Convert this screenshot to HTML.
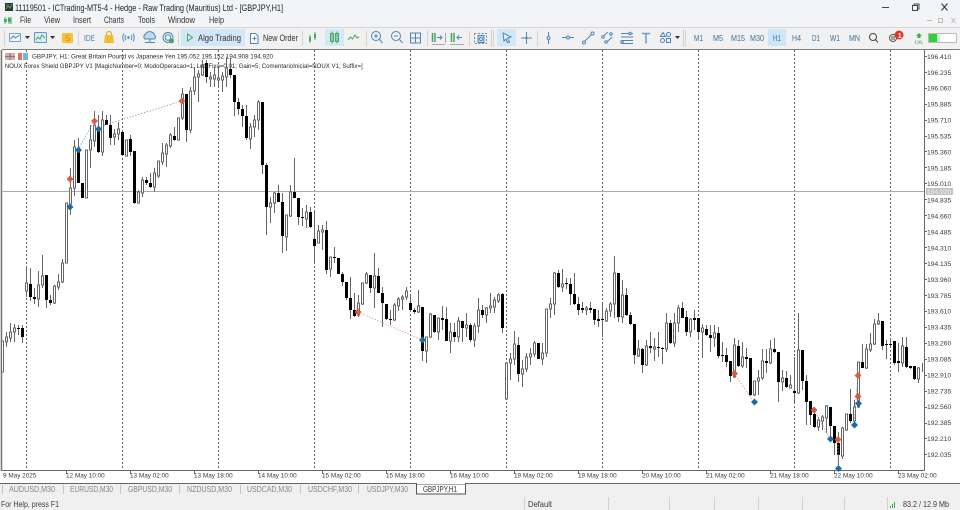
<!DOCTYPE html>
<html lang="en"><head><meta charset="utf-8"><title>MT5</title>
<style>
html,body{margin:0;padding:0;background:#fff;width:960px;height:510px;overflow:hidden}
svg{display:block;font-family:"Liberation Sans",Arial,sans-serif;filter:blur(.3px)}
.t{font-size:9px;fill:#222}
.m{font-size:8.8px;fill:#333}
.b{font-size:8.6px;fill:#3d6f98}
.i{fill:none;stroke:#4a86b8;stroke-width:1}
.g{fill:none;stroke:#45a860;stroke-width:1}
.y{font-size:6.7px;fill:#3a3a3a}
.x{font-size:6.4px;fill:#3a3a3a}
.h{font-size:6.8px;fill:#2a2a2a}
.tab{font-size:8px;fill:#858585}
.s{font-size:8px;fill:#3c3c3c}
</style></head><body>
<svg width="960" height="510" viewBox="0 0 960 510" xmlns="http://www.w3.org/2000/svg">
<defs><linearGradient id="tb" x1="0" y1="0" x2="0" y2="1"><stop offset="0" stop-color="#f0f5fa"/><stop offset="1" stop-color="#f3f4f5"/></linearGradient></defs>
<rect width="960" height="28" fill="url(#tb)"/>
<rect y="28" width="960" height="21" fill="#f1f1f1"/>
<path d="M0 27.5H960" stroke="#d6d6d6"/>
<rect x="5" y="3" width="8" height="8" fill="#2d3a2d"/><path d="M6 9l2-3 2 2 2-4" stroke="#3cc05a" fill="none"/><path d="M6 5h3" stroke="#d05040"/>
<text x="15" y="11" class="t" textLength="268" lengthAdjust="spacingAndGlyphs">11119501 - ICTrading-MT5-4 - Hedge - Raw Trading (Mauritius) Ltd - [GBPJPY,H1]</text>
<path d="M882 7.5h7" stroke="#444"/><rect x="912.5" y="5.5" width="5" height="5" fill="none" stroke="#444"/><path d="M914 5v-1h5v5h-1" fill="none" stroke="#444"/><path d="M941.5 3.5l6 7M947.5 3.500l-6 7" stroke="#333"/>
<path d="M927 20.5h5" stroke="#bbb"/><rect x="938.5" y="18.5" width="4" height="4" fill="none" stroke="#bbb"/><path d="M951.5 18l4 5M955.5 18l-4 5" stroke="#bbb"/>
<path d="M5 17v7M9 17v7M11 17v7" stroke="#4eaa60"/><rect x="4" y="19" width="3" height="3" fill="#4eaa60"/><rect x="8" y="18" width="3" height="4" fill="#4eaa60"/>
<text x="20" y="23" class="m" textLength="11" lengthAdjust="spacingAndGlyphs">File</text>
<text x="44" y="23" class="m" textLength="16" lengthAdjust="spacingAndGlyphs">View</text>
<text x="73" y="23" class="m" textLength="18" lengthAdjust="spacingAndGlyphs">Insert</text>
<text x="104" y="23" class="m" textLength="20" lengthAdjust="spacingAndGlyphs">Charts</text>
<text x="138" y="23" class="m" textLength="17" lengthAdjust="spacingAndGlyphs">Tools</text>
<text x="168" y="23" class="m" textLength="27" lengthAdjust="spacingAndGlyphs">Window</text>
<text x="209" y="23" class="m" textLength="15" lengthAdjust="spacingAndGlyphs">Help</text>

<!-- toolbar -->
<path d="M78.5 31v15M178.5 31v15M302.5 31v15M366.5 31v15M427.5 31v15M469.5 31v15M491.5 30v17M493.5 30v17M537.5 31v15M683.5 30v17M685.5 30v17M4.5 30v17" stroke="#d4d4d4"/>
<rect x="9.5" y="33.5" width="11" height="8" fill="#eef5fb" stroke="#7aa6cc"/><path d="M10.5 39l3-3 2 2 4-3" class="i"/>
<path d="M25 36h5l-2.500 3z" fill="#333"/>
<rect x="34.500" y="32.500" width="12" height="10" rx="1" fill="#dbeaf6" stroke="#5f9ac9"/><path d="M36 40l2-3 2 2 2-4 3 3" class="g"/>
<path d="M50 36h5l-2.500 3z" fill="#333"/>
<rect x="62" y="33" width="11" height="10" rx="1" fill="#f6c23e"/><text x="65" y="41" style="font-size:8px;fill:#d98a10">S</text>
<text x="84" y="41" style="font-size:8px;fill:#3f7fba" textLength="11" lengthAdjust="spacingAndGlyphs">IDE</text>
<path d="M104 43l1-8h8l1 8z" fill="#f3bd2f"/><path d="M106.500 35v-1a2.500 2.500 0 0 1 5 0v1" fill="none" stroke="#e0a020"/>
<circle cx="128.500" cy="37.500" r="1.300" fill="#4a86b8"/><path d="M126 35a4 4 0 0 0 0 5M131 35a4 4 0 0 1 0 5M124 33.500a7 7 0 0 0 0 8M133 33.500a7 7 0 0 1 0 8" class="i"/>
<path d="M145 39a3 3 0 0 1 .5-5 5 5 0 0 1 9 1 2.500 2.500 0 0 1 0 4z" fill="#bcd9ef" stroke="#4a86b8"/><path d="M150 39v3M145 42.500h10" class="i"/>
<circle cx="168" cy="37.500" r="5" class="i"/><circle cx="168" cy="37.500" r="2.800" class="i"/><circle cx="171.500" cy="41" r="2.500" fill="#45a860"/>
<rect x="181" y="29" width="64" height="17" fill="#d2e7f8"/>
<path d="M187.500 34l5 3.500-5 3.500z" fill="none" stroke="#4aa860"/>
<text x="198" y="41" class="m" textLength="43" lengthAdjust="spacingAndGlyphs">Algo Trading</text>
<path d="M250.500 33.500h5l2.500 2.500v7.500h-7.500z" fill="#fdfdfd" stroke="#4a86b8"/><path d="M254.500 36.500v4M252.500 38.500h4" class="i"/>
<text x="263" y="41" class="m" textLength="35" lengthAdjust="spacingAndGlyphs">New Order</text>
<path d="M310 35v8M315 32v8" stroke="#45a860"/><rect x="309" y="37" width="2" height="4" fill="#45a860"/><rect x="314" y="34" width="2" height="4" fill="#45a860"/>
<rect x="325" y="29" width="19" height="17" fill="#d2e7f8"/>
<rect x="330.500" y="33.500" width="3" height="8" fill="none" stroke="#45a860"/><rect x="335.500" y="33.500" width="3" height="8" fill="none" stroke="#45a860"/><path d="M332 31.500v12M337 31.500v12" stroke="#45a860"/>
<path d="M348 40l2.500-3 2 2 2.500-4 2 3 2-1" class="g"/>
<circle cx="376" cy="36" r="4.500" class="i"/><path d="M379.500 39.500l3 3.500M374 36h4M376 34v4" class="i"/>
<circle cx="396" cy="36" r="4.500" class="i"/><path d="M399.500 39.500l3 3.500M394 36h4" class="i"/>
<rect x="410.500" y="33" width="10" height="10" class="i"/><path d="M415.500 33v10M410.500 38h10" class="i"/>
<path d="M432.500 33v9M435 33v9" stroke="#45a860" stroke-width="1.500"/><path d="M437 37.500h4M440 35.500l2 2-2 2" class="i"/><path d="M445.500 33v10" stroke="#aaa"/><path d="M432 44.500h13" stroke="#aaa"/>
<path d="M451.500 33v9M454 33v9" stroke="#45a860" stroke-width="1.500"/><path d="M462 37.500h-4M459 35.500l-2 2 2 2" class="i"/><path d="M450 44.500h14" stroke="#aaa"/>
<rect x="474.500" y="33.500" width="12" height="10" fill="none" stroke="#888" stroke-dasharray="2 1.500"/><rect x="478" y="35.500" width="6" height="7" fill="#bcd9ef" stroke="#4a86b8"/><circle cx="481" cy="39" r="1.500" fill="#fff" stroke="#4a86b8"/>
<rect x="497" y="29" width="19" height="17" fill="#d2e7f8"/><path d="M503 33l8 4-3.500 1 2 4-2 .5-1.500-3.500-2 2z" fill="#e8f3fb" stroke="#4a86b8"/>
<path d="M526.500 32v12M521 38h11" class="i"/><circle cx="526.500" cy="38" r="1.200" fill="#4a86b8"/>
<path d="M548.500 32v12" class="i"/><circle cx="548.500" cy="38" r="1.500" fill="#f1f1f1" stroke="#4a86b8"/>
<path d="M562 37.500h12" class="i"/><circle cx="568" cy="37.500" r="1.500" fill="#f1f1f1" stroke="#4a86b8"/>
<path d="M584 42l8-8" class="i"/><circle cx="584" cy="42.500" r="1.500" fill="#f1f1f1" stroke="#4a86b8"/><circle cx="592.500" cy="33.500" r="1.500" fill="#f1f1f1" stroke="#4a86b8"/>
<path d="M602 37l6-5M606 43l6-6" class="i"/><circle cx="603" cy="37" r="1.300" fill="#f1f1f1" stroke="#4a86b8"/><circle cx="611" cy="34" r="1.300" fill="#f1f1f1" stroke="#4a86b8"/><circle cx="606" cy="42" r="1.300" fill="#f1f1f1" stroke="#4a86b8"/>
<path d="M621 33.500h12M621 37h12M621 40.500h12M621 43.500h12" class="i"/><circle cx="630" cy="33.500" r="1.200" fill="#f1f1f1" stroke="#4a86b8"/><circle cx="622" cy="42" r="1.200" fill="#f1f1f1" stroke="#4a86b8"/>
<path d="M642 33.500h8M646 33.500v10" stroke="#6b9cc4" stroke-width="1.500" fill="none"/>
<path d="M663 32.500l2.500 4h-5z" class="i"/><circle cx="668.500" cy="34.500" r="2" class="i"/><circle cx="662.500" cy="40.500" r="2" class="i"/><rect x="666.500" y="38.500" width="4" height="4" class="i"/>
<path d="M675 36h5l-2.500 3z" fill="#333"/>
<rect x="768" y="29" width="18" height="17" fill="#cfe5f8"/>
<g class="b">
<text x="694" y="41" textLength="9" lengthAdjust="spacingAndGlyphs">M1</text>
<text x="713" y="41" textLength="10" lengthAdjust="spacingAndGlyphs">M5</text>
<text x="731" y="41" textLength="14" lengthAdjust="spacingAndGlyphs">M15</text>
<text x="750" y="41" textLength="14" lengthAdjust="spacingAndGlyphs">M30</text>
<text x="773" y="41" textLength="8" lengthAdjust="spacingAndGlyphs">H1</text>
<text x="792" y="41" textLength="9" lengthAdjust="spacingAndGlyphs">H4</text>
<text x="812" y="41" textLength="8" lengthAdjust="spacingAndGlyphs">D1</text>
<text x="830" y="41" textLength="10" lengthAdjust="spacingAndGlyphs">W1</text>
<text x="849" y="41" textLength="11" lengthAdjust="spacingAndGlyphs">MN</text>
</g>
<circle cx="873" cy="37" r="3.500" fill="none" stroke="#444"/><path d="M875.500 39.500l2.500 3" stroke="#444"/>
<circle cx="893" cy="38" r="3.500" fill="none" stroke="#555"/><path d="M891 37h4M891 39h4" stroke="#555"/>
<circle cx="899" cy="35" r="4.500" fill="#e0352a"/><text x="897.700" y="38" style="font-size:7px;font-weight:bold;fill:#fff">1</text>
<path d="M919 33l3 3h-1.500v2h-3v-2H916z" fill="#3cb04c"/><text x="915" y="43.500" style="font-size:4.500px;fill:#3cb04c;font-weight:bold">LVL</text>
<rect x="928.500" y="33.500" width="28" height="9" fill="#fff" stroke="#bbb"/><rect x="929" y="34" width="8" height="8" fill="#35d040"/><rect x="937" y="34" width="3" height="8" fill="#c9f3cc"/>

<!-- chart frame -->
<rect x="0" y="49" width="2" height="434" fill="#f0f0f0"/>
<rect x="0" y="471" width="960" height="12" fill="#fff"/>
<path d="M2 49.500H960" stroke="#7d7d7d"/>
<path d="M2 470.500H924.500M924.500 50V470.500" stroke="#666"/>
<path d="M1.500 50V471" stroke="#777" stroke-width="1.500"/>
<!-- grid -->
<path d="M26.500 50V470M122.500 50V470M218.500 50V470M314.500 50V470M410.500 50V470M506.500 50V470M602.500 50V470M698.500 50V470M794.500 50V470M890.500 50V470" stroke="#666" stroke-dasharray="2 2"/>
<path d="M2 191.500H924" stroke="#aaa"/>

<!-- wicks -->
<path fill="none" stroke="#666" d="M6.500 332V347M10.500 323V342M14.500 324V342M18.500 325V335M22.500 325V343M26.500 266V297M30.500 268V301M34.500 288V304M38.500 271V307M42.500 255V288M46.500 275V308M50.500 295V305M54.500 285V304M58.500 274V290M62.500 259V283M70.500 168V215M74.500 140V196M78.500 138V183M90.500 125V168M94.500 111V147M98.500 115V153M102.500 111V156M106.500 115V125M110.500 115V145M114.500 129V145M118.500 122V140M122.500 131V155M130.500 135V156M134.500 151V204M138.500 190V203M142.500 177V197M146.500 177V185M150.500 173V188M154.500 168V192M158.500 161V178M162.500 143V165M166.500 143V167M170.500 133V148M174.500 127V141M182.500 88V120M186.500 94V142M190.500 87V133M194.500 67V95M198.500 70V102M202.500 60V76M206.500 60V83M210.500 72V87M214.500 67V87M218.500 68V88M222.500 72V92M226.500 57V87M230.500 58V78M234.500 75V116M238.500 98V115M242.500 105V127M246.500 105V140M250.500 123V149M254.500 115V137M258.500 100V130M262.500 102V174M266.500 163V235M270.500 197V223M274.500 192V213M278.500 185V202M282.500 193V253M286.500 215V251M290.500 185V217M294.500 158V198M298.500 198V225M302.500 208V226M306.500 205V228M310.500 207V228M314.500 210V262M318.500 225V243M322.500 225V250M326.500 221V274M330.500 257V277M334.500 247V263M342.500 272V286M346.500 282V300M350.500 277V319M354.500 293V317M358.500 295V317M362.500 283V305M366.500 272V284M370.500 275V293M374.500 253V308M378.500 268V293M382.500 287V327M386.500 304V320M390.500 310V325M394.500 303V321M398.500 297V311M402.500 295V310M406.500 287V300M410.500 295V311M414.500 308V314M418.500 290V313M422.500 307V361M426.500 337V363M430.500 313V338M434.500 315V333M438.500 318V340M442.500 306V330M446.500 307V341M450.500 323V353M454.500 323V342M458.500 317V342M462.500 321V342M466.500 313V337M470.500 323V342M474.500 323V347M478.500 298V333M482.500 305V318M486.500 307V323M490.500 293V313M494.500 297V313M498.500 293V303M502.500 293V333M510.500 353V380M514.500 331V365M518.500 337V382M522.500 360V387M526.500 353V372M530.500 348V365M534.500 341V357M542.500 343V365M546.500 309V357M550.500 298V318M554.500 272V315M558.500 270V288M562.500 269V292M566.500 278V289M570.500 278V305M574.500 273V305M578.500 297V315M582.500 302V313M586.500 306V315M590.500 302V313M594.500 309V325M598.500 310V327M602.500 303V337M606.500 308V322M610.500 302V317M614.500 256V318M618.500 273V322M622.500 280V323M626.500 288V316M630.500 312V325M634.500 324V364M638.500 340V357M642.500 348V373M646.500 340V366M650.500 332V353M654.500 338V361M658.500 332V357M662.500 347V364M666.500 313V352M670.500 320V344M674.500 313V347M678.500 305V332M682.500 302V318M686.500 311V336M690.500 318V337M694.500 310V330M698.500 318V338M702.500 324V358M706.500 325V336M710.500 325V352M714.500 325V347M718.500 327V358M722.500 342V362M726.500 348V367M730.500 361V382M734.500 338V378M738.500 340V367M742.500 342V368M746.500 348V368M750.500 358V396M754.500 381V396M758.500 370V395M762.500 349V380M766.500 349V373M770.500 340V364M774.500 338V353M778.500 352V402M782.500 370V391M786.500 371V388M790.500 375V388M794.500 357V403M798.500 313V394M802.500 350V390M806.500 375V425M806.500 381V402M810.500 401V425M814.500 410V428M818.500 417V431M822.500 415V430M826.500 405V433M830.500 407V438M834.500 426V455M838.500 432V465M842.500 427V459M846.500 414V431M850.500 389V423M854.500 400V428M858.500 362V408M862.500 344V368M866.500 344V369M870.500 333V352M874.500 319V345M878.500 313V325M882.500 321V350M886.500 340V359M890.500 340V346M894.500 341V365M898.500 343V372M902.500 337V367M906.500 337V368M910.500 366V369M914.500 366V380M918.500 367V383M922.500 363V372"/>
<!-- hollow bodies -->
<path fill="#fff" stroke="#666" d="M1.500 341h2v31h-2zM5.500 337h2v5h-2zM9.500 332h2v6h-2zM13.500 328h2v4h-2zM25.500 283h2v8h-2zM37.500 285h2v14h-2zM41.500 276h2v9h-2zM53.500 286h2v17h-2zM57.500 282h2v5h-2zM61.500 263h2v19h-2zM65.500 203h2v60h-2zM69.500 188h2v16h-2zM73.500 147h2v41h-2zM85.500 150h2v48h-2zM89.500 140h2v10h-2zM93.500 125h2v16h-2zM101.500 120h2v32h-2zM113.500 134h2v3h-2zM117.500 129h2v5h-2zM125.500 140h2v16h-2zM137.500 192h2v11h-2zM141.500 180h2v13h-2zM153.500 173h2v14h-2zM157.500 161h2v15h-2zM161.500 153h2v9h-2zM165.500 145h2v9h-2zM169.500 135h2v11h-2zM177.500 118h2v22h-2zM181.500 94h2v24h-2zM189.500 91h2v39h-2zM193.500 77h2v14h-2zM197.500 74h2v3h-2zM201.500 65h2v10h-2zM209.500 77h2v2h-2zM213.500 75h2v4h-2zM217.500 78h2v2h-2zM221.500 76h2v4h-2zM225.500 68h2v9h-2zM249.500 127h2v12h-2zM253.500 120h2v7h-2zM257.500 102h2v18h-2zM269.500 203h2v4h-2zM273.500 193h2v10h-2zM285.500 215h2v22h-2zM289.500 192h2v24h-2zM305.500 212h2v7h-2zM317.500 231h2v12h-2zM321.500 230h2v2h-2zM329.500 257h2v12h-2zM357.500 303h2v12h-2zM361.500 283h2v21h-2zM365.500 274h2v9h-2zM373.500 276h2v12h-2zM393.500 305h2v15h-2zM397.500 299h2v7h-2zM401.500 297h2v2h-2zM405.500 291h2v6h-2zM417.500 306h2v6h-2zM425.500 337h2v14h-2zM429.500 314h2v23h-2zM437.500 318h2v14h-2zM449.500 332h2v9h-2zM457.500 321h2v16h-2zM465.500 325h2v3h-2zM473.500 326h2v14h-2zM477.500 310h2v16h-2zM485.500 308h2v7h-2zM489.500 306h2v2h-2zM493.500 300h2v7h-2zM497.500 295h2v6h-2zM505.500 363h2v36h-2zM509.500 359h2v4h-2zM513.500 344h2v15h-2zM521.500 369h2v5h-2zM525.500 357h2v12h-2zM529.500 354h2v3h-2zM533.500 343h2v11h-2zM541.500 353h2v6h-2zM545.500 309h2v44h-2zM549.500 304h2v5h-2zM553.500 273h2v31h-2zM561.500 284h2v3h-2zM585.500 308h2v2h-2zM605.500 311h2v10h-2zM609.500 304h2v7h-2zM613.500 273h2v31h-2zM621.500 295h2v22h-2zM637.500 349h2v7h-2zM645.500 346h2v19h-2zM653.500 347h2v2h-2zM665.500 323h2v26h-2zM673.500 323h2v20h-2zM677.500 308h2v15h-2zM689.500 319h2v13h-2zM701.500 328h2v4h-2zM713.500 333h2v5h-2zM733.500 345h2v32h-2zM741.500 357h2v9h-2zM753.500 381h2v14h-2zM757.500 378h2v3h-2zM761.500 361h2v17h-2zM769.500 349h2v14h-2zM781.500 378h2v4h-2zM789.500 385h2v3h-2zM797.500 350h2v43h-2zM817.500 420h2v7h-2zM821.500 417h2v4h-2zM825.500 406h2v12h-2zM841.500 428h2v28h-2zM845.500 414h2v16h-2zM853.500 407h2v14h-2zM857.500 362h2v45h-2zM865.500 349h2v19h-2zM869.500 344h2v6h-2zM873.500 324h2v20h-2zM877.500 321h2v3h-2zM901.500 346h2v17h-2zM917.500 368h2v11h-2z"/>
<!-- black bodies -->
<path fill="none" stroke="#000" stroke-width="3" d="M18.500 328V329M22.500 328V337M30.500 284V297M34.500 297V299M46.500 275V300M50.500 300V303M78.500 150V183M82.500 183V198M98.500 130V152M106.500 120V125M110.500 125V138M122.500 132V155M130.500 139V152M134.500 151V203M146.500 180V183M150.500 183V187M174.500 136V140M186.500 94V130M206.500 63V77M230.500 69V75M234.500 75V102M238.500 102V109M242.500 109V116M246.500 116V138M262.500 102V165M266.500 165V207M278.500 193V202M282.500 202V236M294.500 192V198M298.500 198V217M302.500 217V218M310.500 212V227M314.500 239V246M326.500 230V270M334.500 257V258M338.500 258V274M342.500 274V282M346.500 282V298M350.500 298V310M354.500 310V316M370.500 275V288M378.500 276V293M382.500 293V303M386.500 304V319M390.500 319V320M410.500 303V310M414.500 310V312M422.500 307V351M434.500 315V332M442.500 318V320M446.500 319V341M454.500 332V337M462.500 321V328M470.500 325V340M482.500 310V315M502.500 294V328M518.500 345V374M538.500 343V359M558.500 273V287M566.500 283V284M570.500 284V294M574.500 294V304M578.500 304V310M582.500 308V310M590.500 308V310M594.500 309V320M598.500 319V321M602.500 319V320M618.500 273V317M626.500 295V315M630.500 315V324M634.500 324V355M642.500 349V365M650.500 346V348M658.500 347V348M662.500 348V349M670.500 323V343M682.500 308V318M686.500 317V332M694.500 318V320M698.500 318V332M706.500 329V335M710.500 335V338M718.500 333V356M722.500 355V356M726.500 355V362M730.500 361V376M738.500 346V366M746.500 357V359M750.500 358V395M766.500 361V363M774.500 349V352M778.500 352V382M786.500 378V387M794.500 391V393M802.500 350V381M806.500 381V402M810.500 401V415M814.500 414V427M830.500 407V426M834.500 426V443M838.500 443V455M850.500 414V421M862.500 362V368M882.500 321V346M886.500 344V345M890.500 344V345M894.500 341V363M898.500 361V363M906.500 347V367M910.500 366V368M914.500 366V379"/>
<!-- trend lines -->
<path d="M78 150L94 121M98 127L182 101M858 375L854 425M858 396V404" fill="none" stroke="#6f9fc4" stroke-width=".8" stroke-dasharray="1.500 1.500"/>
<path d="M70 179V207M358 312L422 340M734 373L754 402M814 410L830 439M838 439V468" fill="none" stroke="#e29080" stroke-width=".8" stroke-dasharray="1.500 1.500"/>
<!-- markers -->
<path fill="#dd5a3e" d="M70 175.500l3.500 3.500-3.500 3.500-3.500-3.500zM94.500 117.500l3.500 3.500-3.500 3.500-3.500-3.500zM182 97.500l3.500 3.500-3.500 3.500-3.500-3.500zM358 308.500l3.500 3.500-3.500 3.500-3.500-3.500zM734.500 370l3.500 3.500-3.500 3.500-3.500-3.500zM814 406.500l3.500 3.500-3.500 3.500-3.500-3.500zM838 436l3.500 3.500-3.500 3.500-3.500-3.500zM858 393l3.500 3.500-3.500 3.500-3.500-3.500zM858 372l3.500 3.500-3.500 3.500-3.500-3.500z"/>
<path fill="#1d6aa8" d="M70 203.500l3.500 3.500-3.500 3.500-3.500-3.500zM78.500 146.500l3.500 3.500-3.500 3.500-3.500-3.500zM98.500 125.500l3.500 3.500-3.500 3.500-3.500-3.500zM422.500 336.500l3.500 3.500-3.500 3.500-3.500-3.500zM754.500 398.500l3.500 3.500-3.500 3.500-3.500-3.500zM830.500 435.500l3.500 3.500-3.500 3.500-3.500-3.500zM854.500 421.500l3.500 3.500-3.500 3.500-3.500-3.500zM858.500 400l3.500 3.500-3.500 3.500-3.500-3.500zM838.500 465l3.500 3.500-3.500 3.500-3.500-3.500z"/>
<!-- chart heading -->
<rect x="5" y="53" width="10" height="7" fill="#e9a49a"/><path d="M5 56.500h10M10 53v7" stroke="#4a86b8"/>
<rect x="18" y="53" width="4" height="7" fill="#e07060"/><rect x="23" y="53" width="5" height="7" fill="#7fb0d8"/>
<text x="32" y="58.500" class="h" textLength="241" lengthAdjust="spacingAndGlyphs">GBPJPY, H1:  Great Britain Pound vs Japanese Yen  195.052 195.152 194.908 194.920</text>
<text x="4.700" y="68" class="h" textLength="358" lengthAdjust="spacingAndGlyphs">NOUX Forex Shield GBPJPY V1 [MagicNumber=0; ModoOperacao=1; LoteFixo=0.01; Gain=5; ComentarioInicial=NOUX V1; Suffix=]</text>
<!-- y ticks -->
<path d="M924 56.500h3M924 72.500h3M924 88.500h3M924 104.500h3M924 120.500h3M924 136.500h3M924 151.500h3M924 167.500h3M924 183.500h3M924 199.500h3M924 215.500h3M924 231.500h3M924 247.500h3M924 263.500h3M924 279.500h3M924 295.500h3M924 311.500h3M924 327.500h3M924 343.500h3M924 359.500h3M924 375.500h3M924 391.500h3M924 407.500h3M924 423.500h3M924 438.500h3M924 454.500h3" stroke="#666"/>
<g class="y">
<text x="927" y="59">196.410</text><text x="927" y="75">196.235</text><text x="927" y="90.500">196.060</text><text x="927" y="106.500">195.885</text><text x="927" y="122.500">195.710</text><text x="927" y="138.500">195.535</text><text x="927" y="154.500">195.360</text><text x="927" y="170.500">195.185</text><text x="927" y="186">195.010</text><text x="927" y="202.500">194.835</text><text x="927" y="218.500">194.660</text><text x="927" y="234.500">194.485</text><text x="927" y="250.500">194.310</text><text x="927" y="266">194.135</text><text x="927" y="282">193.960</text><text x="927" y="298">193.785</text><text x="927" y="313.500">193.610</text><text x="927" y="329.500">193.435</text><text x="927" y="345.500">193.260</text><text x="927" y="361.500">193.085</text><text x="927" y="377.500">192.910</text><text x="927" y="393.500">192.735</text><text x="927" y="409">192.560</text><text x="927" y="425">192.385</text><text x="927" y="441">192.210</text><text x="927" y="457">192.035</text>
</g>
<rect x="926" y="188" width="27" height="7" fill="#c4c4c4"/><text x="927" y="194" class="y" style="fill:#eee">194.920</text>
<!-- x ticks -->
<path d="M66.500 470v4M130.500 470v4M194.500 470v4M258.500 470v4M322.500 470v4M386.500 470v4M450.500 470v4M514.500 470v4M578.500 470v4M642.500 470v4M706.500 470v4M770.500 470v4M834.500 470v4M898.500 470v4" stroke="#666"/>
<g class="x">
<text x="3" y="477.500">9 May 2025</text><text x="66" y="477.500">12 May 10:00</text><text x="130" y="477.500">13 May 02:00</text><text x="194" y="477.500">13 May 18:00</text><text x="258" y="477.500">14 May 10:00</text><text x="322" y="477.500">15 May 02:00</text><text x="386" y="477.500">15 May 18:00</text><text x="450" y="477.500">16 May 10:00</text><text x="514" y="477.500">19 May 02:00</text><text x="578" y="477.500">19 May 18:00</text><text x="642" y="477.500">20 May 10:00</text><text x="706" y="477.500">21 May 02:00</text><text x="770" y="477.500">21 May 18:00</text><text x="834" y="477.500">22 May 10:00</text><text x="898" y="477.500">23 May 02:00</text>
</g>
<!-- tabs + status -->
<rect y="483" width="960" height="27" fill="#f0f0f0"/>
<path d="M0 483.500H960" stroke="#666"/>
<path d="M2.500 485v9M63.500 485v9M120.500 485v9M179.500 485v9M240.500 485v9M300.500 485v9M358.500 485v9" stroke="#c4c4c4"/>
<path d="M416.500 484v10h49v-10z" fill="#fff" stroke="#555"/><path d="M417 483.500h48" stroke="#fff"/>
<text x="9" y="492" class="tab" textLength="46" lengthAdjust="spacingAndGlyphs">AUDUSD,M30</text>
<text x="70" y="492" class="tab" textLength="43" lengthAdjust="spacingAndGlyphs">EURUSD,M30</text>
<text x="128" y="492" class="tab" textLength="44" lengthAdjust="spacingAndGlyphs">GBPUSD,M30</text>
<text x="187" y="492" class="tab" textLength="45" lengthAdjust="spacingAndGlyphs">NZDUSD,M30</text>
<text x="247" y="492" class="tab" textLength="45" lengthAdjust="spacingAndGlyphs">USDCAD,M30</text>
<text x="308" y="492" class="tab" textLength="44" lengthAdjust="spacingAndGlyphs">USDCHF,M30</text>
<text x="367" y="492" class="tab" textLength="41" lengthAdjust="spacingAndGlyphs">USDJPY,M30</text>
<text x="423" y="492" class="tab" style="fill:#333" textLength="34" lengthAdjust="spacingAndGlyphs">GBPJPY,H1</text>
<path d="M524.500 497v13M608.500 497v13M669.500 497v13M714.500 497v13M758.500 497v13M802.500 497v13M844.500 497v13M887.500 497v13" stroke="#d0d0d0"/>
<text x="1" y="507" class="s" textLength="58" lengthAdjust="spacingAndGlyphs">For Help, press F1</text>
<text x="528" y="507" class="s" textLength="24" lengthAdjust="spacingAndGlyphs">Default</text>
<path d="M890.500 506v2M892.500 504v4M894.500 502v6" stroke="#3cb04c"/>
<text x="903" y="507" class="s" textLength="46" lengthAdjust="spacingAndGlyphs">83.2 / 12.9 Mb</text>
</svg>
</body></html>
